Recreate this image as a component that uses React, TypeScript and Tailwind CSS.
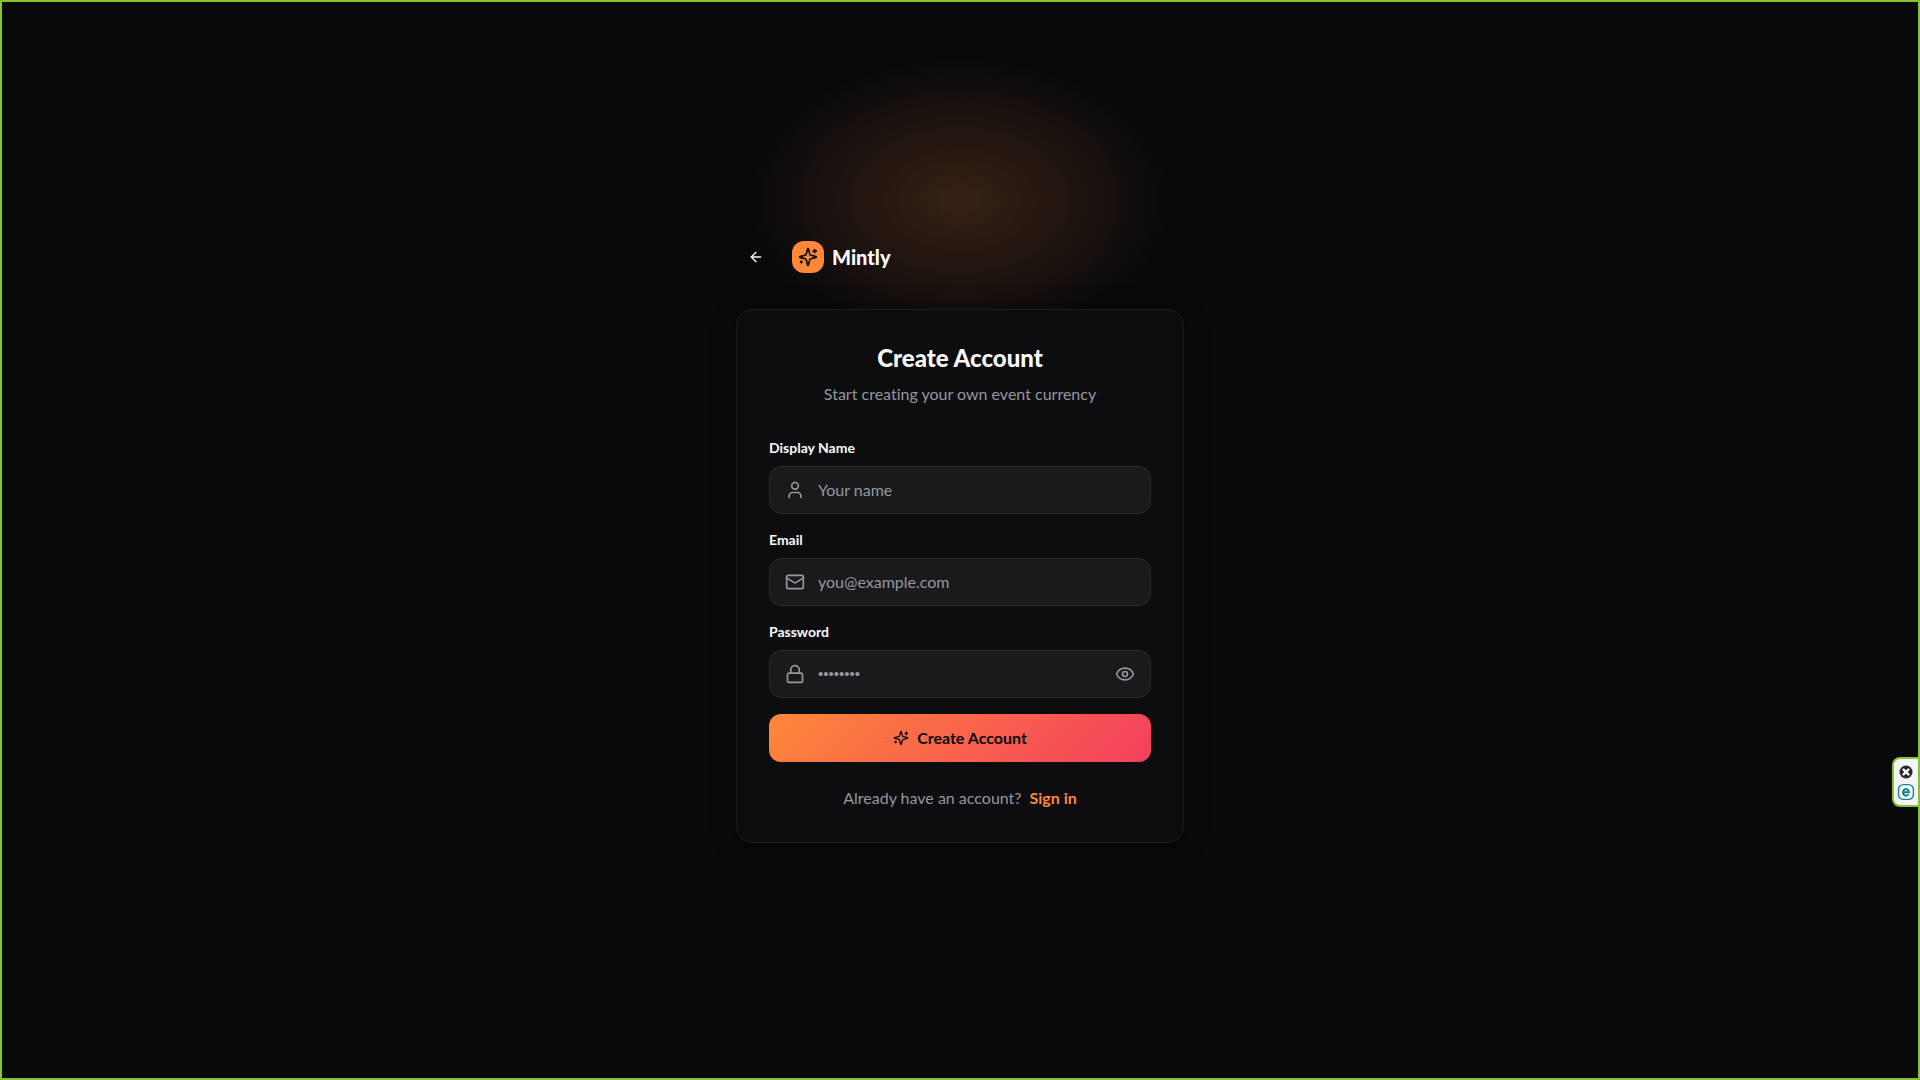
import { useState } from "react";
import type { ReactNode } from "react";
import { ArrowLeft, Eye, EyeOff, Lock, Mail, User } from "lucide-react";

type FieldProps = {
  id: string;
  label: string;
  type: string;
  placeholder: string;
  icon: ReactNode;
  inputClass?: string;
  action?: ReactNode;
};

function SparklesIcon({ className }: { className: string }) {
  return (
    <svg
      viewBox="0 0 24 24"
      className={className}
      fill="none"
      stroke="currentColor"
      strokeWidth="2"
      strokeLinecap="round"
      strokeLinejoin="round"
      aria-hidden="true"
    >
      <path d="M9.937 15.5A2 2 0 0 0 8.5 14.063l-6.135-1.582a.5.5 0 0 1 0-.962L8.5 9.936A2 2 0 0 0 9.937 8.5l1.582-6.135a.5.5 0 0 1 .963 0L14.063 8.5A2 2 0 0 0 15.5 9.937l6.135 1.581a.5.5 0 0 1 0 .964L15.5 14.063a2 2 0 0 0-1.437 1.437l-1.582 6.135a.5.5 0 0 1-.963 0z" />
      <path d="M20 3v4M22 5h-4M4 17v2M5 18H3" />
    </svg>
  );
}

function Field({ id, label, type, placeholder, icon, inputClass = "text-base", action }: FieldProps) {
  return (
    <div>
      <label htmlFor={id} className="mb-2 block text-sm leading-5 font-bold text-[#fafafa]">
        {label}
      </label>
      <div className="flex h-12 items-center gap-[13px] rounded-xl border border-[#29292c] bg-[#1a1a1c] px-[15px] text-[#96969f] focus-within:border-[#fd8839]">
        {icon}
        <input
          id={id}
          type={type}
          placeholder={placeholder}
          className={`min-w-0 flex-1 bg-transparent text-[#fafafa] outline-none placeholder:text-[#96969f] ${inputClass}`}
        />
        {action}
      </div>
    </div>
  );
}

function SideWidget() {
  return (
    <aside className="absolute top-[755px] -right-0.5 flex w-7 flex-col items-center gap-1 rounded-l-lg border-2 border-[#86c232] bg-[#f4f4f6] pt-1.5 pb-1">
      <button type="button" aria-label="Close widget">
        <svg viewBox="0 0 14 14" className="size-3.5">
          <circle cx="7" cy="7" r="6.5" fill="#25252e" />
          <path d="M4.6 4.6l4.8 4.8M9.4 4.6l-4.8 4.8" stroke="#f4f4f6" strokeWidth="2.4" strokeLinecap="round" />
        </svg>
      </button>
      <button type="button" aria-label="Open widget" className="text-[#168292]">
        <svg viewBox="0 0 18 18" className="size-[18px]" fill="none" stroke="currentColor">
          <rect x="1.6" y="1.6" width="14.8" height="14.8" rx="5" strokeWidth="1.4" fill="#ffffff" />
          <path d="M6 9.3h6A3 3.3 0 1 0 11.4 11.4" strokeWidth="2" />
        </svg>
      </button>
    </aside>
  );
}

export default function App() {
  const [visible, setVisible] = useState(false);

  return (
    <div className="relative flex min-h-screen flex-col items-center justify-center overflow-hidden border-2 border-[#86c232] bg-[#09090b] px-4 font-['Lato',sans-serif] text-[#fafafa] [font-variant-ligatures:none]">
      <div className="pointer-events-none absolute -top-0.5 left-1/2 h-[400px] w-[600px] -translate-x-1/2 bg-[radial-gradient(212px_142px_at_center,rgba(253,136,57,0.19),transparent)]" />

      <main className="relative w-full max-w-md">
        <header className="mb-8 flex items-center gap-4">
          <button type="button" aria-label="Back" className="flex size-10 items-center justify-center rounded-xl">
            <ArrowLeft className="size-4" />
          </button>
          <div className="flex items-center gap-2">
            <div className="flex size-8 items-center justify-center rounded-xl bg-[#fd8839] text-[#09090b]">
              <SparklesIcon className="size-5" />
            </div>
            <span className="text-xl font-black">Mintly</span>
          </div>
        </header>

        <section className="rounded-2xl border border-[#1c1c1f] bg-[#0d0d0f] p-8 shadow-[0_4px_24px_rgba(0,0,0,0.4)]">
          <div className="mb-8 text-center">
            <h1 className="mb-2 text-2xl font-black">Create Account</h1>
            <p className="text-base text-[#96969f]">Start creating your own event currency</p>
          </div>

          <form className="flex flex-col gap-4" onSubmit={(e) => e.preventDefault()}>
            <Field id="name" label="Display Name" type="text" placeholder="Your name" icon={<User className="size-5" />} />
            <Field id="email" label="Email" type="email" placeholder="you@example.com" icon={<Mail className="size-5" />} />
            <Field
              id="password"
              label="Password"
              type={visible ? "text" : "password"}
              placeholder="••••••••"
              inputClass="font-['Liberation_Sans',sans-serif] text-[15px]"
              icon={<Lock className="size-5" />}
              action={
                <button type="button" aria-label="Show password" onClick={() => setVisible(!visible)}>
                  {visible ? <EyeOff className="size-5" /> : <Eye className="size-5" />}
                </button>
              }
            />
            <button
              type="submit"
              className="flex h-12 items-center justify-center gap-2 rounded-xl bg-[linear-gradient(135deg,#fd8839,#f43f5e)] text-base font-bold text-[#09090b]"
            >
              <SparklesIcon className="size-4" />
              Create Account
            </button>
          </form>

          <p className="mt-6 flex justify-center gap-2 text-base text-[#96969f]">
            Already have an account?
            <a href="#signin" className="font-bold text-[#fd8839]">
              Sign in
            </a>
          </p>
        </section>
      </main>

      <SideWidget />
    </div>
  );
}
